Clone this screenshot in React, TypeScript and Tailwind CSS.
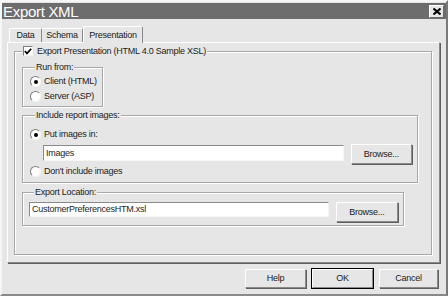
import React from 'react';

const Check = () => (
  <span className="w-[10px] h-[10px] shrink-0 bg-white border border-t-[#7c7c7c] border-l-[#7c7c7c] border-r-[#f4f4f4] border-b-[#f4f4f4] flex items-center justify-center">
    <svg width="8" height="7" viewBox="0 0 8 7">
      <path d="M0.8 3.2 L3 5.4 L7.2 0.8" stroke="#000" strokeWidth="1.7" fill="none" />
    </svg>
  </span>
);

const Radio = ({ on }: { on?: boolean }) => (
  <span className="w-[11px] h-[11px] shrink-0 rounded-full bg-white border border-t-[#7c7c7c] border-l-[#7c7c7c] border-r-[#f4f4f4] border-b-[#f4f4f4] flex items-center justify-center">
    {on && <span className="w-[4px] h-[4px] rounded-full bg-black" />}
  </span>
);

const Button = ({ label, w, def }: { label: string; w: string; def?: boolean }) => (
  <button
    className={`${w} h-full bg-[#e6e6e6] border border-t-white border-l-white border-r-[#8a8a8a] border-b-[#8a8a8a] flex items-center justify-center ${
      def ? 'outline outline-1 outline-black' : 'shadow-[1px_1px_0_#5e5e5e]'
    }`}
  >
    {label}
  </button>
);

const Input = ({ value, w, h }: { value: string; w: string; h: string }) => (
  <div className={`${w} ${h} bg-white border border-t-[#8a8a8a] border-l-[#8a8a8a] border-r-[#f6f6f6] border-b-[#f6f6f6] flex items-center pl-[2px]`}>
    {value}
  </div>
);

export default function App() {
  return (
    <div className="w-[448px] h-[296px] bg-[#e6e6e6] border-2 border-t-[#f6f6f6] border-l-[#f6f6f6] border-r-[#7a7a7a] border-b-[#8a8a8a] flex flex-col text-[9px] tracking-[-0.25px] leading-none whitespace-nowrap text-[#1c1c1c] font-['Liberation_Sans',sans-serif]">
      <div className="mt-px h-[16px] bg-[#6d6d6d] flex items-center justify-between pl-px pr-[2px]">
        <span className="text-white text-[15px] tracking-[-0.3px]">Export XML</span>
        <span className="w-[15px] h-[13px] bg-[#e6e6e6] border border-t-white border-l-white border-r-[#6a6a6a] border-b-[#6a6a6a] flex items-center justify-center">
          <svg width="8" height="7" viewBox="0 0 8 7">
            <path d="M0.5 0.5 L7.5 6.5 M7.5 0.5 L0.5 6.5" stroke="#000" strokeWidth="2" />
          </svg>
        </span>
      </div>

      <div className="mt-[7px] h-[16px] pl-[7px] flex items-end">
        <div className="w-[33px] h-[14px] border-l border-t border-r border-l-white border-t-white border-r-[#8a8a8a] rounded-t-[2px] flex items-center justify-center">
          Data
        </div>
        <div className="w-[41px] h-[14px] border-t border-r border-t-white border-r-[#8a8a8a] rounded-t-[2px] flex items-center justify-center">
          Schema
        </div>
        <div className="relative z-10 -mb-px w-[60px] h-[17px] bg-[#e6e6e6] border-l border-t border-r border-l-white border-t-white border-r-[#8a8a8a] rounded-t-[2px] flex items-start justify-center pt-[4px]">
          Presentation
        </div>
      </div>

      <div className="ml-[5px] w-[433px] h-[221px] border border-t-white border-l-white border-r-[#8a8a8a] border-b-[#8a8a8a] shadow-[1px_1px_0_#5e5e5e]">
        <fieldset className="mt-[2px] ml-[6px] w-[418px] h-[210px] border border-[#a8a8a8] shadow-[inset_1px_1px_0_#fff,1px_1px_0_#fff] flex flex-col">
          <legend className="ml-[7px] px-px h-[12px] bg-[#e6e6e6] flex items-center gap-[4px]">
            <Check />
            <span>Export Presentation (HTML 4.0 Sample XSL)</span>
          </legend>

          <fieldset className="mt-[4px] ml-[7px] w-[81px] h-[46px] border border-[#a8a8a8] shadow-[inset_1px_1px_0_#fff,1px_1px_0_#fff] flex flex-col pl-[7px]">
            <legend className="ml-[5px] px-px h-[12px] bg-[#e6e6e6] flex items-center">Run from:</legend>
            <div className="mt-[2px] h-[13px] flex items-center gap-[3px]">
              <Radio on />
              <span>Client (HTML)</span>
            </div>
            <div className="mt-[2px] h-[13px] flex items-center gap-[3px]">
              <Radio />
              <span>Server (ASP)</span>
            </div>
          </fieldset>

          <fieldset className="mt-[2px] ml-[7px] w-[396px] h-[74px] border border-[#a8a8a8] shadow-[inset_1px_1px_0_#fff,1px_1px_0_#fff] flex flex-col pl-[7px]">
            <legend className="ml-[5px] px-px h-[12px] bg-[#e6e6e6] flex items-center">Include report images:</legend>
            <div className="mt-[7px] h-[13px] flex items-center gap-[3px]">
              <Radio on />
              <span>Put images in:</span>
            </div>
            <div className="mt-[3px] h-[20px] pl-[13px] flex items-start gap-[7px]">
              <div className="mt-px">
                <Input value="Images" w="w-[301px]" h="h-[16px]" />
              </div>
              <Button label="Browse..." w="w-[61px]" />
            </div>
            <div className="mt-px h-[13px] flex items-center gap-[3px]">
              <Radio />
              <span>Don't include images</span>
            </div>
          </fieldset>

          <fieldset className="mt-[3px] ml-[7px] w-[382px] h-[40px] border border-[#a8a8a8] shadow-[inset_1px_1px_0_#fff,1px_1px_0_#fff] flex flex-col pl-[6px]">
            <legend className="ml-[5px] px-px h-[12px] bg-[#e6e6e6] flex items-center">Export Location:</legend>
            <div className="mt-[4px] h-[20px] flex items-start gap-[7px]">
              <Input value="CustomerPreferencesHTM.xsl" w="w-[300px]" h="h-[15px]" />
              <Button label="Browse..." w="w-[62px]" />
            </div>
          </fieldset>
        </fieldset>
      </div>

      <div className="mt-[6px] h-[19px] flex justify-end gap-[6px] pr-[8px]">
        <Button label="Help" w="w-[61px]" />
        <Button label="OK" w="w-[61px]" def />
        <Button label="Cancel" w="w-[59px]" />
      </div>
    </div>
  );
}
